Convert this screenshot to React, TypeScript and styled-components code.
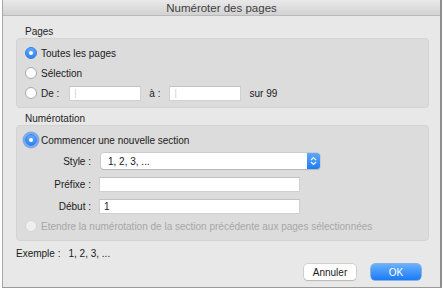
import React from 'react';
import styled, { createGlobalStyle } from 'styled-components';

const GlobalStyle = createGlobalStyle`
  body {
    margin: 0;
    background: #ffffff;
    font-family: "Liberation Sans", Arial, sans-serif;
  }
`;

const Window = styled.div`
  margin-left: 2px;
  width: 437px;
  height: 287px;
  border-left: 1px solid #a6a6a6;
  border-right: 2px solid #8e8e8e;
  border-bottom: 1px solid #9a9a9a;
  background: #e8e8e8;
  display: flex;
  flex-direction: column;
  box-sizing: content-box;
`;

const TitleBar = styled.div`
  height: 15px;
  border-bottom: 1px solid #b9b9b9;
  background: linear-gradient(#e9e9e9, #d2d2d2);
  display: flex;
  align-items: center;
  justify-content: center;
  font-size: 11.5px;
  color: #404040;
`;

const Body = styled.div`
  padding: 10px 11px 0 13px;
  display: flex;
  flex-direction: column;
`;

const GroupLabel = styled.div<{ $top?: number }>`
  height: 12px;
  line-height: 12px;
  font-size: 10px;
  color: #1e1e1e;
  padding-left: 9px;
  margin-top: ${({ $top }) => $top ?? 0}px;
`;

const Group = styled.div`
  background: #dcdcdc;
  border: 1px solid #d3d3d3;
  border-radius: 4px;
  padding: 4px 8px;
  display: flex;
  flex-direction: column;
`;

const RadioRow = styled.div<{ $top?: number }>`
  height: 20px;
  display: flex;
  align-items: center;
  gap: 4px;
  font-size: 10px;
  color: #1a1a1a;
  margin-top: ${({ $top }) => $top ?? 0}px;
`;

const Radio = styled.span<{ $checked?: boolean; $focus?: boolean; $disabled?: boolean }>`
  width: 12px;
  height: 12px;
  border-radius: 50%;
  box-sizing: border-box;
  flex-shrink: 0;
  display: flex;
  align-items: center;
  justify-content: center;
  background: ${({ $checked }) => ($checked ? 'linear-gradient(#62a9fb, #2e84f6)' : '#fdfdfd')};
  border: 1px solid ${({ $checked, $disabled }) => ($checked ? '#2f7ee9' : $disabled ? '#cfcfcf' : '#a9a9a9')};
  box-shadow: ${({ $focus }) => ($focus ? '0 0 0 2.5px rgba(96, 152, 236, 0.75)' : 'none')};
  opacity: ${({ $disabled }) => ($disabled ? 0.6 : 1)};

  &::after {
    content: '';
    width: 4px;
    height: 4px;
    border-radius: 50%;
    background: #fff;
    display: ${({ $checked }) => ($checked ? 'block' : 'none')};
  }
`;

const Text = styled.span<{ $muted?: boolean; $left?: number }>`
  font-size: 10px;
  color: ${({ $muted }) => ($muted ? '#a7a7a7' : '#1a1a1a')};
  margin-left: ${({ $left }) => $left ?? 0}px;
  white-space: nowrap;
`;

const Field = styled.div<{ $width: number; $left?: number }>`
  width: ${({ $width }) => $width}px;
  height: 15px;
  box-sizing: border-box;
  background: #fff;
  border: 1px solid #d0d0d0;
  border-top-color: #c2c2c2;
  margin-left: ${({ $left }) => $left ?? 0}px;
  display: flex;
  align-items: center;
  padding-left: 4px;
  font-size: 10px;
  color: #1a1a1a;
`;

const Caret = styled.span`
  color: #d0d0d0;
  font-size: 9px;
`;

const FormRow = styled.div<{ $top: number; $height: number }>`
  margin-top: ${({ $top }) => $top}px;
  height: ${({ $height }) => $height}px;
  display: flex;
  align-items: center;
`;

const FieldLabel = styled.span`
  width: 66px;
  text-align: right;
  font-size: 10px;
  color: #1a1a1a;
`;

const Select = styled.div`
  margin-left: 10px;
  width: 219px;
  height: 16px;
  box-sizing: border-box;
  background: #fff;
  border-radius: 3px;
  box-shadow: 0 0 0 0.5px #bcbcbc, 0 1px 1px rgba(0, 0, 0, 0.18);
  display: flex;
  align-items: center;
  font-size: 10px;
  color: #1a1a1a;
  overflow: hidden;
`;

const SelectValue = styled.span`
  flex: 1;
  padding-left: 7px;
`;

const Stepper = styled.span`
  width: 13px;
  height: 100%;
  background: linear-gradient(#5fa8fb, #1f7cf4);
  display: flex;
  align-items: center;
  justify-content: center;
`;

const ExampleRow = styled.div`
  margin-top: 5px;
  height: 14px;
  display: flex;
  align-items: center;
`;

const Buttons = styled.div`
  margin-top: 4px;
  display: flex;
  justify-content: flex-end;
  gap: 15px;
  padding-right: 8px;
`;

const Button = styled.div<{ $primary?: boolean; $width: number }>`
  width: ${({ $width }) => $width}px;
  height: 16px;
  box-sizing: border-box;
  border-radius: 4px;
  display: flex;
  align-items: center;
  justify-content: center;
  font-size: 10px;
  color: ${({ $primary }) => ($primary ? '#fff' : '#1a1a1a')};
  background: ${({ $primary }) => ($primary ? 'linear-gradient(#6ab0fc, #1b7bf5)' : '#fff')};
  box-shadow: ${({ $primary }) =>
    $primary ? '0 0 0 0.5px #2a7de8' : '0 0 0 0.5px #b8b8b8, 0 1px 1px rgba(0, 0, 0, 0.2)'};
`;

export default function App() {
  return (
    <>
      <GlobalStyle />
      <Window>
        <TitleBar>Numéroter des pages</TitleBar>
        <Body>
          <GroupLabel>Pages</GroupLabel>
          <Group>
            <RadioRow>
              <Radio $checked />
              <Text>Toutes les pages</Text>
            </RadioRow>
            <RadioRow>
              <Radio />
              <Text>Sélection</Text>
            </RadioRow>
            <RadioRow>
              <Radio />
              <Text>De :</Text>
              <Field $width={72} $left={6}>
                <Caret>|</Caret>
              </Field>
              <Text $left={4}>à :</Text>
              <Field $width={72} $left={5}>
                <Caret>|</Caret>
              </Field>
              <Text $left={4}>sur 99</Text>
            </RadioRow>
          </Group>

          <GroupLabel $top={5}>Numérotation</GroupLabel>
          <Group>
            <RadioRow>
              <Radio $checked $focus />
              <Text>Commencer une nouvelle section</Text>
            </RadioRow>
            <FormRow $top={3} $height={16}>
              <FieldLabel>Style :</FieldLabel>
              <Select>
                <SelectValue>1, 2, 3, ...</SelectValue>
                <Stepper>
                  <svg width="7" height="10" viewBox="0 0 7 10">
                    <path d="M1 4 L3.5 1.5 L6 4 M1 6 L3.5 8.5 L6 6" fill="none" stroke="#fff" strokeWidth="1.2" />
                  </svg>
                </Stepper>
              </Select>
            </FormRow>
            <FormRow $top={8} $height={15}>
              <FieldLabel>Préfixe :</FieldLabel>
              <Field $width={201} $left={8} />
            </FormRow>
            <FormRow $top={7} $height={15}>
              <FieldLabel>Début :</FieldLabel>
              <Field $width={201} $left={8}>1</Field>
            </FormRow>
            <RadioRow $top={2}>
              <Radio $disabled />
              <Text $muted>Etendre la numérotation de la section précédente aux pages sélectionnées</Text>
            </RadioRow>
          </Group>

          <ExampleRow>
            <Text>Exemple :</Text>
            <Text $left={8}>1, 2, 3, ...</Text>
          </ExampleRow>
          <Buttons>
            <Button $width={52}>Annuler</Button>
            <Button $primary $width={50}>OK</Button>
          </Buttons>
        </Body>
      </Window>
    </>
  );
}
